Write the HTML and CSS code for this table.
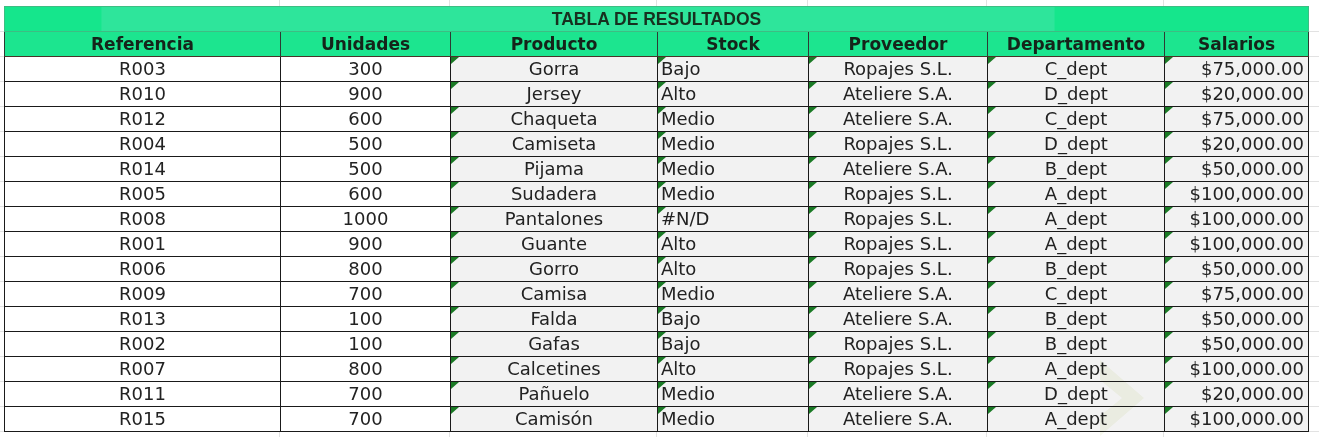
FILE: index.html
```html
<!DOCTYPE html>
<html lang="es">
<head>
<meta charset="utf-8">
<title>Tabla de resultados</title>
<link rel="stylesheet" href="styles.css">
</head>
<body>
<div class="sheet">
  <table class="results">
    <colgroup>
      <col class="w-ref"><col class="w-uni"><col class="w-prod"><col class="w-stock"><col class="w-prov"><col class="w-dep"><col class="w-sal">
    </colgroup>
    <thead>
      <tr class="title-row"><th colspan="7">TABLA DE RESULTADOS</th></tr>
      <tr class="head-row">
        <th>Referencia</th><th>Unidades</th><th>Producto</th><th>Stock</th><th>Proveedor</th><th>Departamento</th><th>Salarios</th>
      </tr>
    </thead>
    <tbody>
      <tr><td>R003</td><td>300</td><td class="flag">Gorra</td><td class="flag left">Bajo</td><td class="flag">Ropajes S.L.</td><td class="flag">C_dept</td><td class="flag right">$75,000.00</td></tr>
      <tr><td>R010</td><td>900</td><td class="flag">Jersey</td><td class="flag left">Alto</td><td class="flag">Ateliere S.A.</td><td class="flag">D_dept</td><td class="flag right">$20,000.00</td></tr>
      <tr><td>R012</td><td>600</td><td class="flag">Chaqueta</td><td class="flag left">Medio</td><td class="flag">Ateliere S.A.</td><td class="flag">C_dept</td><td class="flag right">$75,000.00</td></tr>
      <tr><td>R004</td><td>500</td><td class="flag">Camiseta</td><td class="flag left">Medio</td><td class="flag">Ropajes S.L.</td><td class="flag">D_dept</td><td class="flag right">$20,000.00</td></tr>
      <tr><td>R014</td><td>500</td><td class="flag">Pijama</td><td class="flag left">Medio</td><td class="flag">Ateliere S.A.</td><td class="flag">B_dept</td><td class="flag right">$50,000.00</td></tr>
      <tr><td>R005</td><td>600</td><td class="flag">Sudadera</td><td class="flag left">Medio</td><td class="flag">Ropajes S.L.</td><td class="flag">A_dept</td><td class="flag right">$100,000.00</td></tr>
      <tr><td>R008</td><td>1000</td><td class="flag">Pantalones</td><td class="flag left">#N/D</td><td class="flag">Ropajes S.L.</td><td class="flag">A_dept</td><td class="flag right">$100,000.00</td></tr>
      <tr><td>R001</td><td>900</td><td class="flag">Guante</td><td class="flag left">Alto</td><td class="flag">Ropajes S.L.</td><td class="flag">A_dept</td><td class="flag right">$100,000.00</td></tr>
      <tr><td>R006</td><td>800</td><td class="flag">Gorro</td><td class="flag left">Alto</td><td class="flag">Ropajes S.L.</td><td class="flag">B_dept</td><td class="flag right">$50,000.00</td></tr>
      <tr><td>R009</td><td>700</td><td class="flag">Camisa</td><td class="flag left">Medio</td><td class="flag">Ateliere S.A.</td><td class="flag">C_dept</td><td class="flag right">$75,000.00</td></tr>
      <tr><td>R013</td><td>100</td><td class="flag">Falda</td><td class="flag left">Bajo</td><td class="flag">Ateliere S.A.</td><td class="flag">B_dept</td><td class="flag right">$50,000.00</td></tr>
      <tr><td>R002</td><td>100</td><td class="flag">Gafas</td><td class="flag left">Bajo</td><td class="flag">Ropajes S.L.</td><td class="flag">B_dept</td><td class="flag right">$50,000.00</td></tr>
      <tr><td>R007</td><td>800</td><td class="flag">Calcetines</td><td class="flag left">Alto</td><td class="flag">Ropajes S.L.</td><td class="flag">A_dept</td><td class="flag right">$100,000.00</td></tr>
      <tr><td>R011</td><td>700</td><td class="flag">Pañuelo</td><td class="flag left">Medio</td><td class="flag">Ateliere S.A.</td><td class="flag">D_dept</td><td class="flag right">$20,000.00</td></tr>
      <tr><td>R015</td><td>700</td><td class="flag">Camisón</td><td class="flag left">Medio</td><td class="flag">Ateliere S.A.</td><td class="flag">A_dept</td><td class="flag right">$100,000.00</td></tr>
    </tbody>
  </table>
  <svg class="watermark" aria-hidden="true" width="60" height="84" viewBox="0 0 60 84"><path d="M8 4 L52 42 L8 80 L8 60 L30 42 L8 24 Z" fill="#f7f9ee"/></svg>
</div>
</body>
</html>
```

FILE: styles.css
```css
html, body {
  margin: 0;
  padding: 0;
  background: #ffffff;
}

.sheet {
  position: relative;
  width: 1319px;
  height: 437px;
  overflow: hidden;
  padding: 6px 0 0 4px;
  box-sizing: border-box;
  background-color: #ffffff;
  background-image:
    repeating-linear-gradient(to bottom, transparent 0 24px, #e2e2e2 24px 25px),
    linear-gradient(to right, transparent 279px, #e2e2e2 279px 280px, transparent 280px 449px, #e2e2e2 449px 450px, transparent 450px 656px, #e2e2e2 656px 657px, transparent 657px 807px, #e2e2e2 807px 808px, transparent 808px 986px, #e2e2e2 986px 987px, transparent 987px 1163px, #e2e2e2 1163px 1164px, transparent 1164px);
  background-position: 0 7px, 0 0;
}

.results {
  border-collapse: collapse;
  table-layout: fixed;
  width: 1304px;
  font-family: "DejaVu Sans", "Liberation Sans", sans-serif;
  font-size: 18px;
  color: #222222;
}

.w-ref { width: 276px; }
.w-uni { width: 170px; }
.w-prod { width: 207px; }
.w-stock { width: 151px; }
.w-prov { width: 179px; }
.w-dep { width: 177px; }
.w-sal { width: 144px; }

.results tr {
  height: 25px;
}

.results th,
.results td {
  padding: 0;
  height: 24px;
  line-height: 24px;
  white-space: nowrap;
  overflow: hidden;
}

.title-row th {
  font-family: "Liberation Sans", "DejaVu Sans", sans-serif;
  font-weight: 700;
  font-size: 17.5px;
  color: #17301f;
  text-align: center;
  border: 1px solid #3dbd83;
  background: linear-gradient(to right, #15e68c 0 96px, #2ee59b 96px 1049px, #15e68c 1049px);
}

.head-row th {
  font-family: "DejaVu Sans", "Liberation Sans", sans-serif;
  font-weight: 700;
  font-size: 17px;
  color: #15241a;
  text-align: center;
  background: #1ce58f;
  border-left: 1px solid #2e3b33;
  border-right: 1px solid #2e3b33;
  border-top: 1px solid #3dbd83;
  border-bottom: 1px solid #4a3328;
}

.results td {
  border: 1px solid #1a1a1a;
  text-align: center;
  background: #ffffff;
}

.results td.flag {
  position: relative;
  background: #f2f2f2;
}

.results td.flag::before {
  content: "";
  position: absolute;
  left: 0;
  top: 0;
  width: 8px;
  height: 7px;
  background: #1a7a25;
  clip-path: polygon(0 0, 100% 0, 0 100%);
}

.results td.left {
  text-align: left;
  padding-left: 3px;
}

.results td.right {
  text-align: right;
  padding-right: 4px;
}

.watermark {
  position: absolute;
  left: 1092px;
  top: 356px;
  mix-blend-mode: multiply;
  pointer-events: none;
}
```
